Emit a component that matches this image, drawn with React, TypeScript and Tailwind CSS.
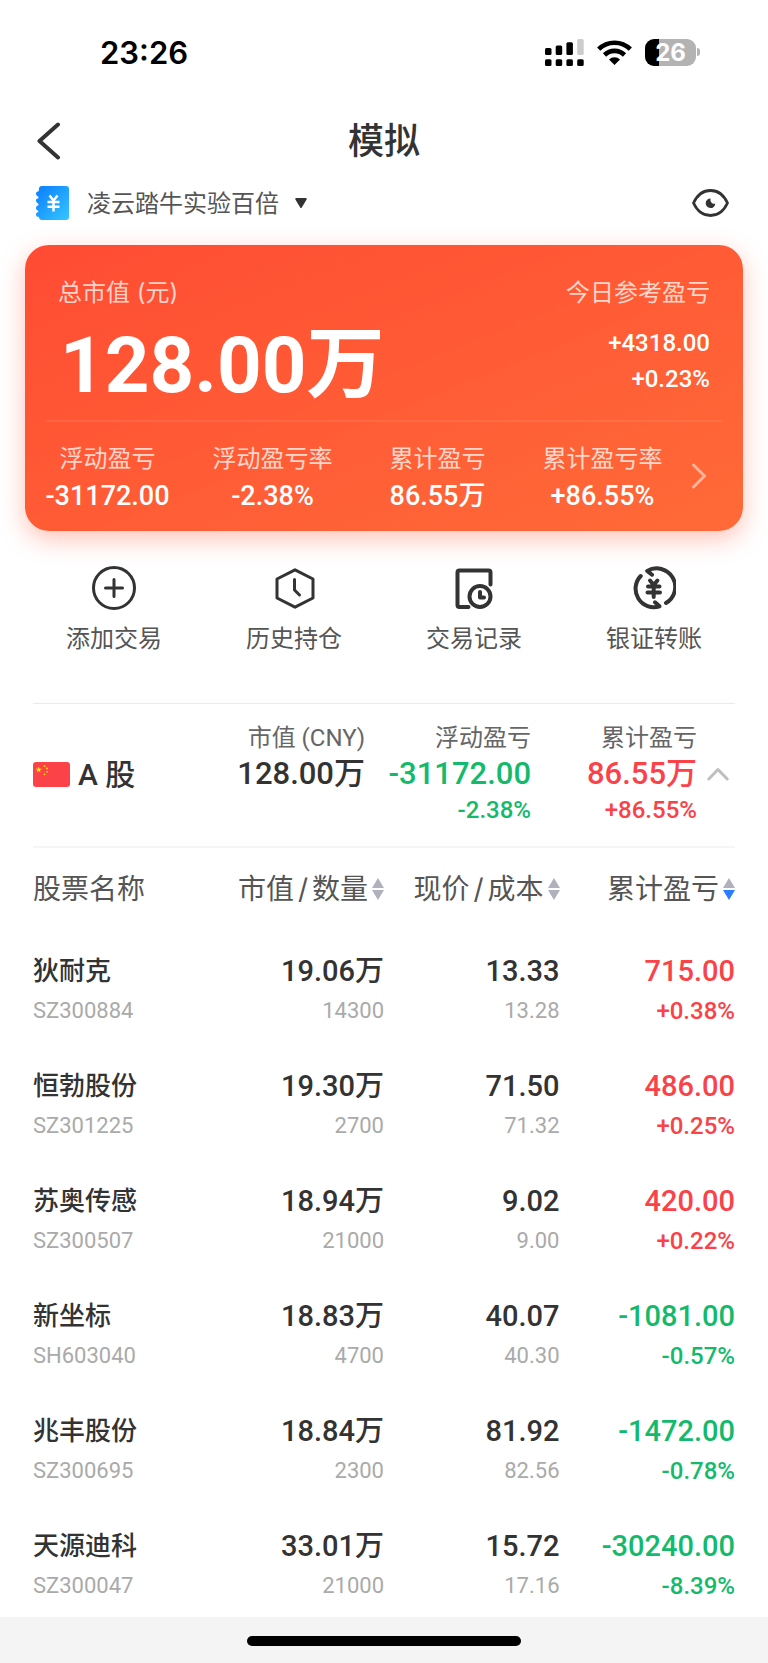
import { useState } from 'react';
import clsx from 'clsx';

const numFont = "font-[Roboto,'Noto_Sans_CJK_SC',sans-serif]";

interface Holding {
  name: string;
  code: string;
  value: string;
  amount: string;
  price: string;
  cost: string;
  profit: string;
  rate: string;
}

const holdings: Holding[] = [
  { name: '狄耐克', code: 'SZ300884', value: '19.06万', amount: '14300', price: '13.33', cost: '13.28', profit: '715.00', rate: '+0.38%' },
  { name: '恒勃股份', code: 'SZ301225', value: '19.30万', amount: '2700', price: '71.50', cost: '71.32', profit: '486.00', rate: '+0.25%' },
  { name: '苏奥传感', code: 'SZ300507', value: '18.94万', amount: '21000', price: '9.02', cost: '9.00', profit: '420.00', rate: '+0.22%' },
  { name: '新坐标', code: 'SH603040', value: '18.83万', amount: '4700', price: '40.07', cost: '40.30', profit: '-1081.00', rate: '-0.57%' },
  { name: '兆丰股份', code: 'SZ300695', value: '18.84万', amount: '2300', price: '81.92', cost: '82.56', profit: '-1472.00', rate: '-0.78%' },
  { name: '天源迪科', code: 'SZ300047', value: '33.01万', amount: '21000', price: '15.72', cost: '17.16', profit: '-30240.00', rate: '-8.39%' },
];

const stats = [
  { label: '浮动盈亏', value: '-31172.00' },
  { label: '浮动盈亏率', value: '-2.38%' },
  { label: '累计盈亏', value: '86.55万' },
  { label: '累计盈亏率', value: '+86.55%' },
];

const columns = ['市值/数量', '现价/成本', '累计盈亏'];

const actions = [
  { label: '添加交易', Icon: AddIcon },
  { label: '历史持仓', Icon: HistoryIcon },
  { label: '交易记录', Icon: RecordIcon },
  { label: '银证转账', Icon: TransferIcon },
];

function AddIcon() {
  return (
    <svg width="44" height="44" viewBox="0 0 44 44" fill="none" stroke="#333" strokeWidth="3" strokeLinecap="round">
      <circle cx="22" cy="22" r="20.5" />
      <path d="M22 13.5v17M13.5 22h17" />
    </svg>
  );
}

function HistoryIcon() {
  return (
    <svg width="44" height="44" viewBox="0 0 44 44" fill="none" stroke="#333" strokeWidth="3" strokeLinecap="round" strokeLinejoin="round">
      <path d="M23 3.8 41 13v19L23 41.200 5 32V13z" />
      <path d="M22.500 13.500v10.500l5 5" />
    </svg>
  );
}

function RecordIcon() {
  return (
    <svg width="44" height="44" viewBox="0 0 44 44" fill="none" stroke="#333" strokeWidth="4" strokeLinecap="round" strokeLinejoin="round">
      <path d="M38.500 18.500V6.500a2 2 0 0 0-2-2h-29a2 2 0 0 0-2 2v32.500a2 2 0 0 0 2 2h9" />
      <circle cx="28" cy="30.500" r="10.500" />
      <path d="M28 26v5.500h4" />
    </svg>
  );
}

function TransferIcon() {
  return (
    <svg width="44" height="44" viewBox="0 0 44 44" fill="none" stroke="#333" strokeWidth="4" strokeLinecap="round" strokeLinejoin="round">
      <path d="M8.700 10A18.400 18.400 0 0 0 27.500 40.300l-4.500-4" />
      <path d="M34 37A18.400 18.400 0 0 0 15.200 4.900l4.800 3.800" />
      <path d="M18 14.500l3.700 4.500 3.700-4.500M16 20.500h11.500M15.500 26.500h12.500M21.700 19.500v11.500" />
    </svg>
  );
}

function StatusBar() {
  return (
    <div className="flex h-[104px] items-center justify-between pl-[100px] pr-[68px]">
      <time className="pt-0.5 text-[31px] leading-8 font-semibold text-black">23:26</time>
      <div className="flex items-center gap-[13px]">
        <svg width="39" height="27" viewBox="0 0 39 27">
          <rect x="0" y="9" width="6.500" height="7" rx="1.500" />
          <rect x="10.700" y="6.500" width="6.500" height="9.500" rx="1.500" />
          <rect x="21.400" y="3.200" width="6.500" height="12.800" rx="1.500" />
          <rect x="32.200" y="0" width="6.500" height="16" rx="1.500" fill="#ccc" />
          <rect x="0" y="20.300" width="6.500" height="6.700" rx="1.500" />
          <rect x="10.700" y="20.300" width="6.500" height="6.700" rx="1.500" />
          <rect x="21.400" y="20.300" width="6.500" height="6.700" rx="1.500" />
          <rect x="32.200" y="20.300" width="6.500" height="6.700" rx="1.500" />
        </svg>
        <svg width="35" height="25" viewBox="0 0 35 25" fill="none" stroke="#000" strokeWidth="4.600">
          <path d="M1.700 9.200a22.500 22.500 0 0 1 31.600 0" />
          <path d="M7.500 15a14.300 14.300 0 0 1 20 0" />
          <path d="M12 19.600a7.800 7.800 0 0 1 11 0L17.500 25z" fill="#000" stroke="none" />
        </svg>
        <div className="flex items-center gap-px">
          <div className="flex h-[27px] w-[51px] items-center justify-center rounded-[9px] bg-linear-to-r from-black from-27% to-[#b3b3b3] to-27% pt-px text-2xl leading-none font-bold text-white">
            26
          </div>
          <div className="h-2 w-[3px] rounded-r-full bg-[#b3b3b3]" />
        </div>
      </div>
    </div>
  );
}

function AccountRow({ onToggle }: { onToggle: () => void }) {
  return (
    <div className="flex h-[54px] items-center justify-between pl-9 pr-[39px]">
      <div className="flex items-center">
        <svg width="33" height="34" viewBox="0 0 33 34" aria-hidden="true">
          <defs>
            <linearGradient id="wallet" x1="0" y1="0" x2="1" y2="1">
              <stop offset="0" stopColor="#0a7cff" />
              <stop offset="1" stopColor="#36c6ff" />
            </linearGradient>
          </defs>
          <path
            fill="url(#wallet)"
            d="M6 0h24a3 3 0 0 1 3 3v28a3 3 0 0 1-3 3H6a3 3 0 0 1-3-3C.500 31 0 30 0 28.500s1-2.500 2.500-2.500c0-2-2.500-1.500-2.500-4s2.500-2 2.500-3.500S0 17 0 14.500 2.500 13 2.500 11.500 0 10 0 8s1-2.500 2.500-2.500L3 3a3 3 0 0 1 3-3z"
          />
          <path d="M13.500 9.500l4 5 4-5M11.500 16h12M11.500 20.800h12M17.500 16v9.500" fill="none" stroke="#fff" strokeWidth="2.500" />
        </svg>
        <select aria-label="账户" className="ml-[18px] appearance-none bg-transparent pt-0.5 text-2xl leading-8 text-[#555]">
          <option>凌云踏牛实验百倍</option>
        </select>
        <svg width="12" height="10" viewBox="0 0 12 10" className="ml-4" fill="#333" aria-hidden="true">
          <path d="M1.200 0h9.600a1 1 0 0 1 .8 1.600L6.800 9.400a1 1 0 0 1-1.600 0L.4 1.600A1 1 0 0 1 1.200 0z" />
        </svg>
      </div>
      <button type="button" aria-label="显示或隐藏金额" onClick={onToggle}>
        <svg width="37" height="28" viewBox="0 0 37 28" fill="none" stroke="#333" strokeWidth="2.800" strokeLinejoin="round">
          <path d="M1.500 14C5 6.500 11 1.500 18.500 1.500S32 6.500 35.500 14C32 21.500 26 26.500 18.500 26.500S5 21.500 1.500 14z" />
          <path d="M18.500 9.500a4.800 4.800 0 1 0 4.800 5.200c-3 .6-5.400-1.700-4.800-5.200z" fill="#333" stroke="none" />
        </svg>
      </button>
    </div>
  );
}

function AssetCard({ hidden }: { hidden: boolean }) {
  const show = (v: string) => (hidden ? '****' : v);
  return (
    <section className="mx-[25px] mt-[15px] rounded-3xl bg-linear-to-br from-[#ff4b33] to-[#ff6a38] text-white shadow-[0_8px_24px_rgba(255,80,50,0.35)]">
      <div className="flex justify-between px-[33px] pt-8 pb-[9px]">
        <div>
          <div className="text-2xl leading-8 text-white/75">总市值 (元)</div>
          <div className={clsx(numFont, 'mt-3 pl-0.5 text-[78px] leading-[90px] font-bold')}>{show('128.00万')}</div>
        </div>
        <div className="text-right">
          <div className="mb-4 text-2xl leading-8 text-white/75">今日参考盈亏</div>
          <div className={clsx(numFont, 'text-2xl leading-9 font-medium')}>{show('+4318.00')}</div>
          <div className={clsx(numFont, 'text-2xl leading-9 font-medium')}>{show('+0.23%')}</div>
        </div>
      </div>
      <div className="mx-5 h-0.5 bg-white/8" />
      <a href="#detail" className="flex items-start pt-[21px] pr-9 pb-[15px]">
        <dl className="grid flex-1 grid-cols-4 text-center">
          {stats.map((s) => (
            <div key={s.label}>
              <dt className="text-2xl leading-8 text-white/75">{s.label}</dt>
              <dd className={clsx(numFont, 'mt-px text-[27px] leading-10 font-medium')}>{show(s.value)}</dd>
            </div>
          ))}
        </dl>
        <svg width="16" height="26" viewBox="0 0 16 26" className="mt-5 ml-1.5" fill="none" stroke="#fff" strokeOpacity="0.5" strokeWidth="3" strokeLinecap="round" strokeLinejoin="round">
          <path d="M2.500 2 13.500 13 2.500 24" />
        </svg>
      </a>
    </section>
  );
}

function MarketSummary({ open, onToggle }: { open: boolean; onToggle: () => void }) {
  return (
    <section className="mx-[33px] grid grid-cols-[1fr_1fr_1fr_1fr_38px] border-t border-b-2 border-t-[#ebebeb] border-b-[#f5f5f5] pt-[18px] pb-5 text-right">
      <h2 className={clsx(numFont, 'flex items-center gap-2 text-[30px] font-medium text-[#333]')}>
        <svg width="37" height="25" viewBox="0 0 37 25" aria-hidden="true">
          <rect width="37" height="25" rx="3" fill="#fa4248" />
          <g fill="#ffea00">
            <path d="M5.700 4.500l.8 2.300h2.400L7 8.200l.7 2.400-2-1.500-2 1.500.7-2.400-1.900-1.400h2.400z" />
            <circle cx="11.500" cy="4.200" r="0.900" />
            <circle cx="14" cy="6.500" r="0.900" />
            <circle cx="14" cy="9.800" r="0.900" />
            <circle cx="11.500" cy="12.300" r="0.900" />
          </g>
        </svg>
        <span className="whitespace-nowrap">A 股</span>
      </h2>
      <div>
        <div className={clsx(numFont, 'text-2xl leading-8 whitespace-nowrap text-[#666]')}>市值 (CNY)</div>
        <div className={clsx(numFont, 'text-[31px] leading-10 font-medium text-[#333]')}>128.00万</div>
      </div>
      <div className="text-[#14ba6c]">
        <div className="text-2xl leading-8 text-[#666]">浮动盈亏</div>
        <div className={clsx(numFont, 'text-[31px] leading-10 font-medium')}>-31172.00</div>
        <div className={clsx(numFont, 'text-2xl leading-8 font-medium')}>-2.38%</div>
      </div>
      <div className="text-[#fa4248]">
        <div className="text-2xl leading-8 text-[#666]">累计盈亏</div>
        <div className={clsx(numFont, 'text-[31px] leading-10 font-medium')}>86.55万</div>
        <div className={clsx(numFont, 'text-2xl leading-8 font-medium')}>+86.55%</div>
      </div>
      <button type="button" aria-label="展开或收起" aria-expanded={open} onClick={onToggle} className="flex items-center justify-center pl-1">
        <svg width="22" height="14" viewBox="0 0 22 14" className={clsx(!open && 'rotate-180')} fill="none" stroke="#bfbfbf" strokeWidth="3" strokeLinecap="round" strokeLinejoin="round">
          <path d="M1.800 12 11 2.500l9.200 9.500" />
        </svg>
      </button>
    </section>
  );
}

function HoldingsTable() {
  const [sortBy, setSortBy] = useState('累计盈亏');

  return (
    <div className="px-[33px]">
      <table className="w-full table-fixed">
        <thead>
          <tr className="h-[77px] text-[28px] leading-9 text-[#555]">
            <th className="pt-1 text-left font-normal">股票名称</th>
            {columns.map((c) => (
              <th key={c} className="pt-1 text-right font-normal">
                <button type="button" onClick={() => setSortBy(c)} className="inline-flex items-center gap-1 whitespace-nowrap">
                  {c.replace('/', ' / ').split(' ').map((part) => (
                    <span key={part}>{part}</span>
                  ))}
                  <svg width="12" height="22" viewBox="0 0 12 22" fill="#b1b1bd" aria-hidden="true">
                    <path d="M6 0l6 10H0z" />
                    <path d="M6 22l6-10H0z" fill={sortBy === c ? '#2b7dff' : '#b1b1bd'} />
                  </svg>
                </button>
              </th>
            ))}
          </tr>
        </thead>
        <tbody className="text-right">
          {holdings.map((h) => (
            <tr key={h.code} className="h-[115px] text-[#333]">
              <td className="pt-4 text-left">
                <div className="text-[26px] leading-10 font-medium">{h.name}</div>
                <div className={clsx(numFont, 'text-[22px] leading-10 text-[#aaa]')}>{h.code}</div>
              </td>
              <td className={clsx(numFont, 'pt-4')}>
                <div className="text-[29px] leading-10 font-medium">{h.value}</div>
                <div className="text-[22px] leading-10 text-[#aaa]">{h.amount}</div>
              </td>
              <td className={clsx(numFont, 'pt-4')}>
                <div className="text-[29px] leading-10 font-medium">{h.price}</div>
                <div className="text-[22px] leading-10 text-[#aaa]">{h.cost}</div>
              </td>
              <td className={clsx(numFont, 'pt-4 font-medium', h.profit.startsWith('-') ? 'text-[#14ba6c]' : 'text-[#fa4248]')}>
                <div className="text-[29px] leading-10">{h.profit}</div>
                <div className="text-2xl leading-10">{h.rate}</div>
              </td>
            </tr>
          ))}
        </tbody>
      </table>
    </div>
  );
}

export default function App() {
  const [hidden, setHidden] = useState(false);
  const [open, setOpen] = useState(true);

  return (
    <div className="flex min-h-screen flex-col bg-white font-[Inter,'Noto_Sans_CJK_SC',sans-serif]">
      <StatusBar />

      <header className="grid h-[72px] grid-cols-[1fr_auto_1fr] items-center px-9 pt-0.5">
        <a href="#back" aria-label="返回" className="justify-self-start">
          <svg width="25" height="38" viewBox="0 0 25 38" fill="none" stroke="#333" strokeWidth="4" strokeLinecap="round" strokeLinejoin="round">
            <path d="M22 2.500 3.500 19 22 35.500" />
          </svg>
        </a>
        <h1 className="text-4xl font-medium text-[#333]">模拟</h1>
      </header>

      <main className="flex-1">
        <AccountRow onToggle={() => setHidden(!hidden)} />
        <AssetCard hidden={hidden} />

        <nav className="grid grid-cols-4 px-6 pt-[35px] pb-12">
          {actions.map(({ label, Icon }) => (
            <button key={label} type="button" className="flex flex-col items-center gap-[13px] text-2xl leading-8 text-[#555]">
              <Icon />
              {label}
            </button>
          ))}
        </nav>

        <MarketSummary open={open} onToggle={() => setOpen(!open)} />
        {open && <HoldingsTable />}
      </main>

      {/* Home indicator */}
      <footer className="flex justify-center bg-[#f4f4f4] pt-[19px] pb-[17px]">
        <div className="h-2.5 w-[274px] rounded-full bg-black" />
      </footer>
    </div>
  );
}
